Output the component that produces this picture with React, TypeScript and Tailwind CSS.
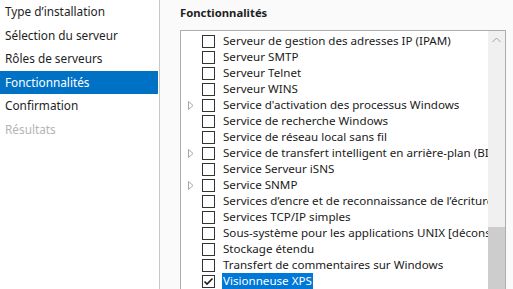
const navItems = [
  { label: "Type d’installation", state: "normal" },
  { label: "Sélection du serveur", state: "normal" },
  { label: "Rôles de serveurs", state: "normal" },
  { label: "Fonctionnalités", state: "active" },
  { label: "Confirmation", state: "normal" },
  { label: "Résultats", state: "disabled" },
];

const features = [
  { label: "Serveur de gestion des adresses IP (IPAM)" },
  { label: "Serveur SMTP" },
  { label: "Serveur Telnet" },
  { label: "Serveur WINS" },
  { label: "Service d'activation des processus Windows", expand: true },
  { label: "Service de recherche Windows" },
  { label: "Service de réseau local sans fil" },
  { label: "Service de transfert intelligent en arrière-plan (BITS)", expand: true },
  { label: "Service Serveur iSNS" },
  { label: "Service SNMP", expand: true },
  { label: "Services d’encre et de reconnaissance de l’écriture manuscrite" },
  { label: "Services TCP/IP simples" },
  { label: "Sous-système pour les applications UNIX [déconseillé]" },
  { label: "Stockage étendu" },
  { label: "Transfert de commentaires sur Windows" },
  { label: "Visionneuse XPS", checked: true, selected: true },
];

const Checkbox = ({ checked }: { checked?: boolean }) => (
  <div className="w-[13px] h-[13px] border border-[#333333] bg-white shrink-0 flex items-center justify-center">
    {checked && (
      <svg width="11" height="11" viewBox="0 0 11 11">
        <path d="M1.5 5.5 L4 8 L9.5 2.5" fill="none" stroke="#1a1a1a" strokeWidth="1.6" />
      </svg>
    )}
  </div>
);

const Expander = () => (
  <svg width="6" height="9" viewBox="0 0 6 9">
    <path d="M0.5 0.5 L5 4.5 L0.5 8.5 Z" fill="none" stroke="#a6a6a6" strokeWidth="1" />
  </svg>
);

export default function App() {
  return (
    <div
      className="w-[513px] h-[289px] flex overflow-hidden bg-[#fafafa] text-[#1e1e1e]"
      style={{ fontFamily: '"Noto Sans", "Open Sans", sans-serif' }}
    >
      <div className="w-[160px] shrink-0 bg-white border-r border-[#c8c8c8] flex flex-col">
        {navItems.map((item) => (
          <div
            key={item.label}
            className={
              "h-[23.6px] pl-[5px] flex items-center text-[11.8px] " +
              (item.state === "active"
                ? "bg-[#0072c6] text-white w-[158px]"
                : item.state === "disabled"
                ? "text-[#b4b4b4]"
                : "text-[#1e1e1e]")
            }
          >
            {item.label}
          </div>
        ))}
      </div>

      <div className="flex-1 min-w-0 flex flex-col pl-[20px] pr-[7px]">
        <div className="h-[30px] pt-[5px] text-[11.3px] font-bold">Fonctionnalités</div>
        <div className="flex-1 flex border border-[#adadad] border-b-0 bg-white min-h-0">
          <div className="flex-1 min-w-0 pt-[5px] overflow-hidden">
            <div className="-mt-[3px]">
              {features.map((f) => (
                <div key={f.label} className="h-[16px] flex items-center text-[11.6px] whitespace-nowrap">
                  <div className="w-[21px] pl-[7px] shrink-0 flex items-center">{f.expand && <Expander />}</div>
                  <Checkbox checked={f.checked} />
                  <div
                    className={
                      "ml-[7px] h-[16px] px-[1px] flex items-center " +
                      (f.selected ? "bg-[#0078d7] text-white" : "text-[#1a1a1a]")
                    }
                  >
                    {f.label}
                  </div>
                </div>
              ))}
            </div>
          </div>
          <div className="w-[17px] shrink-0 bg-[#f0f0f0] flex flex-col">
            <div className="h-[17px] flex items-center justify-center">
              <svg width="9" height="6" viewBox="0 0 9 6">
                <path d="M0.5 5 L4.5 1 L8.5 5" fill="none" stroke="#a3a3a3" strokeWidth="1" />
              </svg>
            </div>
            <div className="h-[179px]" />
            <div className="flex-1 bg-[#cdcdcd]" />
          </div>
        </div>
      </div>
    </div>
  );
}
